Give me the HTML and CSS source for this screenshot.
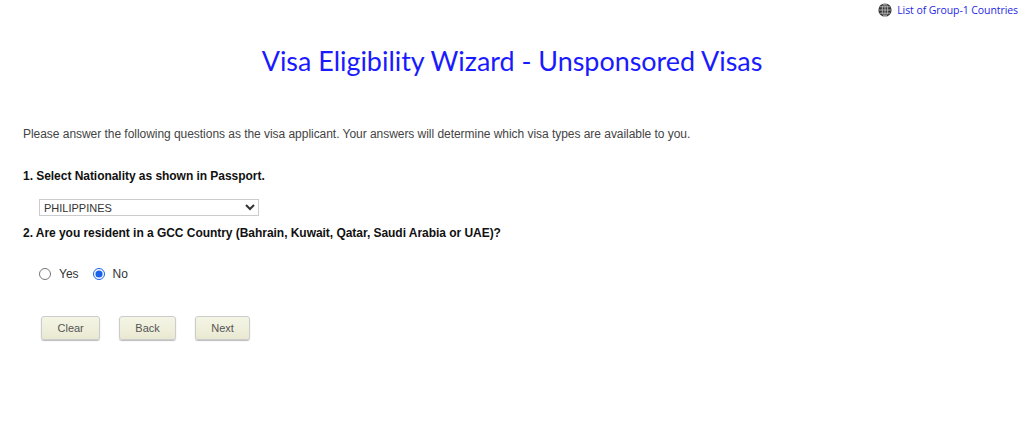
FILE: index.html
```html
<!DOCTYPE html>
<html lang="en">
<head>
<meta charset="utf-8">
<title>Visa Eligibility Wizard</title>
<link rel="stylesheet" href="styles.css">
</head>
<body>
<div class="topbar">
  <a class="group-link" href="#">
    <svg class="globe" viewBox="0 0 14 14" width="14" height="14" aria-hidden="true">
      <circle cx="7" cy="7" r="6.6" fill="#333"/>
      <g fill="none" stroke="#c8c8c8" stroke-width="0.8">
        <ellipse cx="7" cy="7" rx="2.8" ry="6.4"/>
        <path d="M7 .6v12.8M.6 7h12.8M1.6 3.8h10.8M1.6 10.2h10.8"/>
      </g>
    </svg>
    <span>List of Group-1 Countries</span>
  </a>
</div>
<h1 class="title">Visa Eligibility Wizard - Unsponsored Visas</h1>
<main class="wizard">
  <p class="intro">Please answer the following questions as the visa applicant. Your answers will determine which visa types are available to you.</p>
  <p class="question q1">1. Select Nationality as shown in Passport.</p>
  <div class="select-row">
    <select class="nationality"><option>PHILIPPINES</option></select>
  </div>
  <p class="question q2">2. Are you resident in a GCC Country (Bahrain, Kuwait, Qatar, Saudi Arabia or UAE)?</p>
  <div class="radios">
    <label class="radio"><input type="radio" name="gcc"><span>Yes</span></label>
    <label class="radio"><input type="radio" name="gcc" checked><span>No</span></label>
  </div>
  <div class="actions">
    <button class="btn" type="button">Clear</button>
    <button class="btn" type="button">Back</button>
    <button class="btn" type="button">Next</button>
  </div>
</main>
</body>
</html>
```
FILE: styles.css
```css
html, body { margin: 0; padding: 0; background: #fff; }
body { font-family: "Liberation Sans", Arial, sans-serif; height: 448px; overflow: hidden; color: #333; }
.topbar { display: flex; justify-content: flex-end; padding: 1px 6px 0 0; height: 17px; }
.group-link { display: flex; align-items: center; gap: 5px; color: #1f1fe6; text-decoration: none; font: 10.5px/16px "Open Sans", sans-serif; letter-spacing: -0.08px; }
.globe { display: block; }
.title { margin: 25px 0 0; text-align: center; font: 400 26.9px/36px "Lato", sans-serif; color: #1a1aff; }
.wizard { padding: 0 23px; }
.intro { margin: 47px 0 0; font-size: 12px; line-height: 16px; color: #444; letter-spacing: -0.04px; }
.question { margin: 0; font-size: 12px; line-height: 16px; font-weight: 700; color: #111; letter-spacing: -0.04px; }
.q1 { margin-top: 26px; }
.select-row { margin: 15px 0 0 16px; display: flex; }
.nationality { width: 220px; height: 17px; padding: 0; font: 11px "Liberation Sans", sans-serif; color: #333; background: #fff; border: 1px solid #ccc; border-radius: 0; }
.q2 { margin-top: 9px; }
.radios { display: flex; gap: 14px; margin: 25px 0 0 16px; height: 16px; align-items: center; }
.radio { display: flex; align-items: center; gap: 8px; font-size: 12px; color: #333; }
.radio input { margin: 0; width: 12px; height: 12px; accent-color: #1a62e8; }
.actions { display: flex; gap: 18.5px; margin: 34px 0 0 18px; }
.btn { height: 24px; padding: 0 15.5px; font: 11px "Liberation Sans", sans-serif; color: #555; background: linear-gradient(#f5f5e6, #efefdc 50%, #e9e9d2); border: 1px solid #ccc; border-radius: 3px; box-shadow: 0 1px 1px #bbb; }
```
